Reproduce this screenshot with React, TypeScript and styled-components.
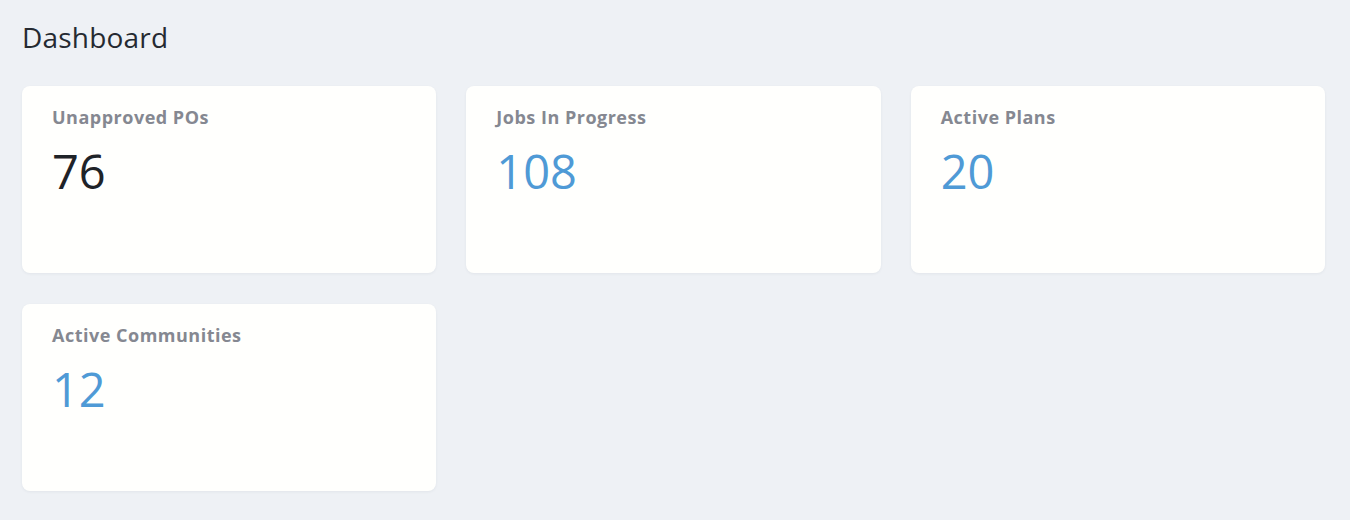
import { createGlobalStyle } from "styled-components";
import styled from "styled-components";

const GlobalStyle = createGlobalStyle`
  html, body {
    margin: 0;
    padding: 0;
    background: #eef1f5;
    font-family: "Open Sans", Lato, sans-serif;
  }
`;

const Page = styled.div`
  padding: 17px 25px 30px 22px;
  min-height: 520px;
  box-sizing: border-box;
  background: #eef1f5;
`;

const Title = styled.h1`
  margin: 0 0 29px 0;
  font-weight: 400;
  font-size: 28px;
  line-height: 40px;
  letter-spacing: 0.2px;
  color: #252a31;
`;

const Grid = styled.div`
  display: grid;
  grid-template-columns: repeat(3, 1fr);
  gap: 31px 30px;
`;

const Card = styled.div`
  height: 187px;
  box-sizing: border-box;
  padding: 19px 30px;
  background: #fffffd;
  border-radius: 8px;
  box-shadow: 0 1px 3px rgba(40, 50, 70, 0.06);
`;

const Label = styled.div`
  font-weight: 700;
  font-size: 18px;
  line-height: 24px;
  letter-spacing: 0.5px;
  color: #858891;
`;

const Value = styled.div<{ $accent?: boolean }>`
  margin-top: 15px;
  font-weight: 400;
  font-size: 47px;
  line-height: 54px;
  color: ${({ $accent }) => ($accent ? "#4f9ad6" : "#1f2328")};
`;

const stats = [
  { label: "Unapproved POs", value: 76, accent: false },
  { label: "Jobs In Progress", value: 108, accent: true },
  { label: "Active Plans", value: 20, accent: true },
  { label: "Active Communities", value: 12, accent: true },
];

export default function App() {
  return (
    <Page>
      <GlobalStyle />
      <Title>Dashboard</Title>
      <Grid>
        {stats.map((s) => (
          <Card key={s.label}>
            <Label>{s.label}</Label>
            <Value $accent={s.accent}>{s.value}</Value>
          </Card>
        ))}
      </Grid>
    </Page>
  );
}
